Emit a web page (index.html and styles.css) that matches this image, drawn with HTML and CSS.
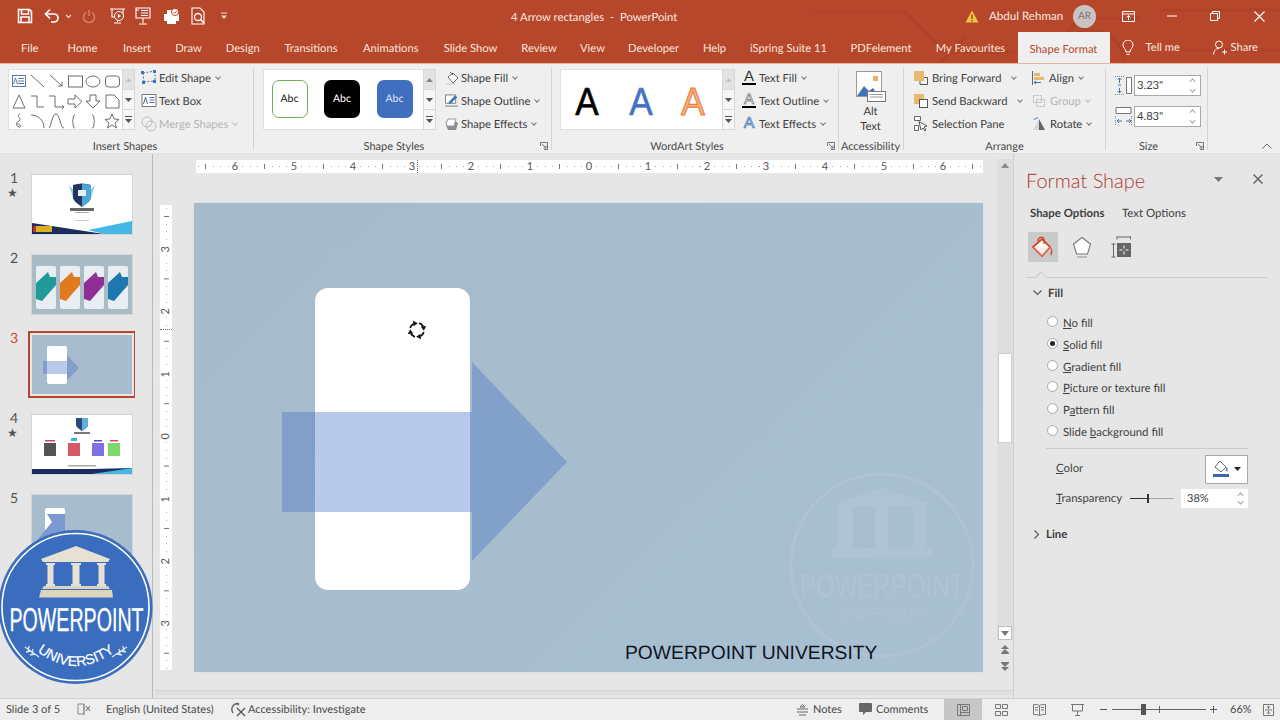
FILE: index.html
```html
<!DOCTYPE html>
<html lang="en">
<head>
<meta charset="utf-8">
<title>4 Arrow rectangles - PowerPoint</title>
<link rel="stylesheet" href="styles.css">
</head>
<body>
<div class="app">
  <div class="top">
    <svg class="circuit" viewBox="0 0 1280 63"><path d="M815 12h90l40 40h70M1040 63l40-45h60M1090 30a34 34 0 1 0 1 0M1160 10h120M1180 50h100M940 63l25-25" /></svg>
    <header class="titlebar">
      <div class="qat">
        <svg class="i q-save" width="16" height="16" viewBox="0 0 16 16"><path d="M1.500 1.500h11l2 2v11h-13z" fill="none" stroke="#fff" stroke-width="1.600"/><path d="M4.500 2v4h7V2M4 14.500V9h8v5.500" fill="none" stroke="#fff" stroke-width="1.500"/></svg>
        <svg class="i q-undo" width="16" height="16" viewBox="0 0 16 16"><path d="M2 6h8a4 4 0 0 1 0 8H7" fill="none" stroke="#fff" stroke-width="1.700"/><path d="M6 1.500 1.500 6 6 10.500" fill="none" stroke="#fff" stroke-width="1.700"/></svg>
        <svg class="i q-caret" width="7" height="5" viewBox="0 0 7 5"><path d="M1 1l2.500 2.500L6 1" fill="none" stroke="#f3d9d0" stroke-width="1.200"/></svg>
        <svg class="i q-redo" width="14" height="15" viewBox="0 0 14 15"><path d="M4 3.500a5.500 5.500 0 1 0 6 0M7 1v6" fill="none" stroke="#d98a72" stroke-width="1.300"/></svg>
        <svg class="i q-a" width="17" height="18" viewBox="0 0 17 18"><path d="M1 2h15M3 2v8h11V2M8.500 10v5M5 16h7" fill="none" stroke="#fff" stroke-width="1.100"/><circle cx="10" cy="9" r="4.500" fill="#b7472a" stroke="#fff"/><path d="M8.800 6.800 12 9l-3.200 2.200z" fill="#fff"/></svg>
        <svg class="i q-b" width="16" height="18" viewBox="0 0 16 18"><path d="M1 3h3M1 1h14v10H1zM8 11v5M4 17h8M6 3.500h7M6 6h7M6 8.500h7" fill="none" stroke="#fff" stroke-width="1.100"/></svg>
        <svg class="i q-c" width="17" height="17" viewBox="0 0 17 17"><path d="M1 6h15v7h-3v3H4v-3H1z" fill="#fff"/><path d="M4 6V2h8v4" fill="#fff"/><circle cx="12" cy="4" r="3.500" fill="#fff" stroke="#b7472a"/><path d="M10.500 4l1.200 1.200L13.800 3" fill="none" stroke="#b7472a"/></svg>
        <svg class="i q-d" width="14" height="18" viewBox="0 0 14 18"><path d="M1 1h8l4 4v12H1z" fill="none" stroke="#fff" stroke-width="1.100"/><circle cx="7" cy="10" r="3.500" fill="none" stroke="#fff" stroke-width="1.300"/><path d="M9.500 12.500 13 16" stroke="#fff" stroke-width="1.600"/></svg>
        <svg class="i q-e" width="8" height="8" viewBox="0 0 8 8"><path d="M1 1h6" stroke="#f3d9d0"/><path d="M1 3.500h6L4 7z" fill="#f3d9d0"/></svg>
      </div>
      <div class="doc-title">4 Arrow rectangles&nbsp; -&nbsp; PowerPoint</div>
      <div class="win">
        <svg class="i w-warn" width="14" height="13" viewBox="0 0 14 13"><path d="M7 .5 13.500 12.500H.500z" fill="#f5c242"/><path d="M7 4.500v4.500M7 10v1.500" stroke="#7a4a10" stroke-width="1.300"/></svg>
        <span class="user">Abdul Rehman</span>
        <span class="avatar">AR</span>
        <svg class="i w-a" width="13" height="11" viewBox="0 0 13 11"><path d="M.5.500h12v10H.5zM.5 3h12M6.500 9V4.500M4.500 6.500l2-2 2 2" fill="none" stroke="#fff"/></svg>
        <svg class="i w-b" width="10" height="2" viewBox="0 0 10 2"><path d="M0 1h10" stroke="#fff"/></svg>
        <svg class="i w-c" width="10" height="10" viewBox="0 0 10 10"><path d="M.5 2.500h7v7h-7zM2.500 2.500V.5h7v7h-2" fill="none" stroke="#fff"/></svg>
        <svg class="i w-d" width="11" height="11" viewBox="0 0 11 11"><path d="M.5.500l10 10M10.500.500l-10 10" stroke="#fff" stroke-width="1.100"/></svg>
      </div>
    </header>
    <nav class="tabs">
      <span class="tab">File</span><span class="tab">Home</span><span class="tab">Insert</span><span class="tab">Draw</span><span class="tab">Design</span><span class="tab">Transitions</span><span class="tab">Animations</span><span class="tab">Slide Show</span><span class="tab">Review</span><span class="tab">View</span><span class="tab">Developer</span><span class="tab">Help</span><span class="tab">iSpring Suite 11</span><span class="tab">PDFelement</span><span class="tab">My Favourites</span><span class="tab tab-active">Shape Format</span>
      <span class="tab-extra">
        <svg class="i" width="12" height="16" viewBox="0 0 12 16"><path d="M4 12c0-3-3-4-3-7a5 5 0 0 1 10 0c0 3-3 4-3 7zM4.500 14.500h3" fill="none" stroke="#fff"/></svg>
        <span class="tell">Tell me</span>
        <svg class="i share-i" width="14" height="15" viewBox="0 0 14 15"><circle cx="6" cy="4.500" r="3.500" fill="none" stroke="#fff"/><path d="M.5 14.500C1 10 3 8.500 6 8.500M9 12h5M11.500 9.500v5" fill="none" stroke="#fff"/></svg>
        <span>Share</span>
      </span>
    </nav>
  </div>

  <section class="ribbon">
    <div class="group g1">
      <div class="gbody">
        <div class="gallery gal-shapes">
          <svg class="i" width="114" height="61" viewBox="0 0 114 61"><g fill="none" stroke="#5c5c5c" stroke-width=".9">
            <rect x="3.500" y="5.500" width="13" height="11" stroke="#4a6a96"/><path d="M9 8.500h6M9 11h6M9 13.500h6M4.500 14l2-6 2 6" stroke="#4a6a96"/>
            <path d="M22 5l13 12M41 5l12 11M53 16v-4M53 16h-4"/>
            <rect x="59.500" y="6" width="14" height="11"/><ellipse cx="84" cy="11.500" rx="7" ry="5.500"/><rect x="96.500" y="6" width="14" height="11" rx="3"/>
            <path d="M10 25 4 38h12zM22 26h6v11h7M40 26h6v11h8M53 35l2 2-2 2M59 29h7v-4l7 6.500-7 6.500v-4h-7zM81 25h6v6h4l-7 7-7-7h4zM97 25h8l5 5v8H97z"/>
            <path d="M11 44c-5 2 3 5-1 7s-3 5 0 6 1-4-2-3M22 45c7 0 13 5 13 13M40 58c2-1 3-14 7-14s4 14 8 14"/>
            <path d="M66 45c-3 0-1 6-3 6.500 2 .5 0 6.500 3 6.500M83 45c3 0 1 6 3 6.500-2 .5 0 6.500-3 6.500"/>
            <path d="M103 44l2 5 5 .5-4 3.500 1.500 5-4.500-3-4.500 3 1.500-5-4-3.500 5-.5z"/></g></svg>
        </div>
        <div class="gscroll">
          <span class="gs gs-dis"><svg class="i" width="7" height="4" viewBox="0 0 7 4"><path d="M3.500 0 7 4H0z" fill="#c6c6c6"/></svg></span>
          <span class="gs"><svg class="i" width="7" height="4" viewBox="0 0 7 4"><path d="M0 0h7L3.500 4z" fill="#555"/></svg></span>
          <span class="gs"><svg class="i" width="7" height="7" viewBox="0 0 7 7"><path d="M0 .5h7" stroke="#555"/><path d="M0 3h7L3.500 7z" fill="#555"/></svg></span>
        </div>
        <div class="btns btns-1">
          <div class="rb"><svg class="i" width="16" height="15" viewBox="0 0 16 15"><path d="M2 3 14 1M2 3l1 9M3 12l11-1M14 1v10" fill="none" stroke="#3f74b5" stroke-dasharray="2 1.500"/><path d="M0 1h3v3H0zM12 0h3v3h-3zM1 11h3v3H1zM12 10h3v3h-3z" fill="#3f74b5"/></svg><span>Edit Shape</span><i class="car"></i></div>
          <div class="rb"><svg class="i" width="15" height="13" viewBox="0 0 15 13"><path d="M.5.500h14v12H.5z" fill="#fff" stroke="#777"/><path d="M8 3.500h5M8 6h5M8 8.500h5M2 10l2-7 2 7" fill="none" stroke="#4a6a96"/></svg><span>Text Box</span></div>
          <div class="rb rb-dis"><svg class="i" width="16" height="16" viewBox="0 0 16 16"><circle cx="6" cy="6" r="5" fill="none" stroke="#bdbdbd"/><circle cx="10" cy="10" r="5" fill="none" stroke="#bdbdbd"/></svg><span>Merge Shapes</span><i class="car"></i></div>
        </div>
      </div>
      <div class="glabel">Insert Shapes</div>
    </div>

    <div class="group g2">
      <div class="gbody">
        <div class="gallery gal-styles">
          <span class="abc abc-a">Abc</span><span class="abc abc-b">Abc</span><span class="abc abc-c">Abc</span>
        </div>
        <div class="gscroll">
          <span class="gs gs-dis"><svg class="i" width="7" height="4" viewBox="0 0 7 4"><path d="M3.500 0 7 4H0z" fill="#888"/></svg></span>
          <span class="gs"><svg class="i" width="7" height="4" viewBox="0 0 7 4"><path d="M0 0h7L3.500 4z" fill="#555"/></svg></span>
          <span class="gs"><svg class="i" width="7" height="7" viewBox="0 0 7 7"><path d="M0 .5h7" stroke="#555"/><path d="M0 3h7L3.500 7z" fill="#555"/></svg></span>
        </div>
        <div class="btns btns-2">
          <div class="rb"><svg class="i" width="14" height="14" viewBox="0 0 14 14"><path d="M3 6 8 2l5 5-5 5z" fill="#fff" stroke="#666"/><path d="M5 1l3 3" stroke="#666"/><path d="M1 13h9" stroke="#ddd" stroke-width="2"/></svg><span>Shape Fill</span><i class="car"></i></div>
          <div class="rb"><svg class="i" width="15" height="15" viewBox="0 0 15 15"><path d="M.5 1.500h11v9H.5z" fill="#fff" stroke="#777"/><path d="M4 9l7-7 2 2-7 7H4z" fill="#3f74b5"/><path d="M0 13.500h14" stroke="#777"/></svg><span>Shape Outline</span><i class="car"></i></div>
          <div class="rb"><svg class="i" width="14" height="14" viewBox="0 0 14 14"><path d="M1 4h9l3 2-2 7H3L1 8z" fill="#8c8c8c"/><path d="M1 6l2-4h8l-2 7H2z" fill="#fff" stroke="#999"/></svg><span>Shape Effects</span><i class="car"></i></div>
        </div>
      </div>
      <div class="glabel">Shape Styles</div>
      <svg class="launch" width="8" height="8" viewBox="0 0 8 8"><path d="M.5 4V.5H7.500V7.500H4M2 2l4 4M6 3.500V6H3.500" fill="none" stroke="#777"/></svg>
    </div>

    <div class="group g3">
      <div class="gbody">
        <div class="gallery gal-wordart">
          <span class="wa wa-a">A</span><span class="wa wa-b">A</span><span class="wa wa-c">A</span>
        </div>
        <div class="gscroll">
          <span class="gs gs-dis"><svg class="i" width="7" height="4" viewBox="0 0 7 4"><path d="M3.500 0 7 4H0z" fill="#c6c6c6"/></svg></span>
          <span class="gs"><svg class="i" width="7" height="4" viewBox="0 0 7 4"><path d="M0 0h7L3.500 4z" fill="#555"/></svg></span>
          <span class="gs"><svg class="i" width="7" height="7" viewBox="0 0 7 7"><path d="M0 .5h7" stroke="#555"/><path d="M0 3h7L3.500 7z" fill="#555"/></svg></span>
        </div>
        <div class="btns btns-3">
          <div class="rb"><span class="ta ta-fill">A</span><span>Text Fill</span><i class="car"></i></div>
          <div class="rb"><span class="ta ta-line">A</span><span>Text Outline</span><i class="car"></i></div>
          <div class="rb"><span class="ta ta-fx">A</span><span>Text Effects</span><i class="car"></i></div>
        </div>
      </div>
      <div class="glabel">WordArt Styles</div>
      <svg class="launch" width="8" height="8" viewBox="0 0 8 8"><path d="M.5 4V.5H7.500V7.500H4M2 2l4 4M6 3.500V6H3.500" fill="none" stroke="#777"/></svg>
    </div>

    <div class="group g4">
      <div class="gbody alt">
        <svg class="i" width="30" height="31" viewBox="0 0 30 31"><path d="M.5.500h25v25H.5z" fill="#fff" stroke="#999"/><rect x="17" y="5" width="5" height="5" fill="#e8b35c"/><path d="M1 25l7-10 5 5 4-3 5 8z" fill="#3f74b5"/><rect x="11.500" y="20.500" width="18" height="10" fill="#fff" stroke="#777"/><path d="M14 23.500h13M14 26h13" stroke="#999"/></svg>
        <div class="alt-t">Alt<br>Text</div>
      </div>
      <div class="glabel">Accessibility</div>
    </div>

    <div class="group g5">
      <div class="gbody">
        <div class="btns btns-5a">
          <div class="rb"><svg class="i" width="14" height="14" viewBox="0 0 14 14"><rect x="0" y="0" width="10" height="10" fill="#e6b96c"/><path d="M10 6.500h3.500v7H6V10" fill="none" stroke="#555"/></svg><span>Bring Forward</span><i class="car car-far"></i></div>
          <div class="rb"><svg class="i" width="14" height="14" viewBox="0 0 14 14"><rect x="0" y="0" width="10" height="10" fill="#e6b96c"/><rect x="5.500" y="5.500" width="8" height="8" fill="#fff" stroke="#555"/></svg><span>Send Backward</span><i class="car car-far"></i></div>
          <div class="rb"><svg class="i" width="14" height="15" viewBox="0 0 14 15"><path d="M.5.500h6v4h-6zM.5 9.500h4v5h-4z" fill="#fff" stroke="#666"/><path d="M5 5.500 13 10l-3 1 2 3-1 1-2-3-2 2z" fill="#fff" stroke="#555"/></svg><span>Selection Pane</span></div>
        </div>
        <div class="btns btns-5b">
          <div class="rb"><svg class="i" width="13" height="14" viewBox="0 0 13 14"><path d="M.5 0v14" stroke="#666"/><rect x="2" y="2" width="6" height="3" fill="#e6b96c"/><rect x="2" y="6" width="10" height="3" fill="#e6b96c"/><path d="M2 11.500h7M2 11.500l2-1.500M2 11.500 4 13" stroke="#3f74b5" fill="none"/></svg><span>Align</span><i class="car"></i></div>
          <div class="rb rb-dis"><svg class="i" width="14" height="14" viewBox="0 0 14 14"><path d="M1.500 1.500h8v7h-8zM4.500 5.500h8v7h-8z" fill="none" stroke="#bbb" stroke-dasharray="2 1"/></svg><span>Group</span><i class="car"></i></div>
          <div class="rb"><svg class="i" width="14" height="13" viewBox="0 0 14 13"><path d="M7 2 13 13H7z" fill="#666"/><path d="M7 2 1 13h6z" fill="#d6d6d6"/><path d="M2 3c1-2 3-2 4-2" stroke="#3f74b5" fill="none"/></svg><span>Rotate</span><i class="car"></i></div>
        </div>
      </div>
      <div class="glabel">Arrange</div>
    </div>

    <div class="group g6">
      <div class="gbody size">
        <div class="size-row">
          <svg class="i" width="17" height="21" viewBox="0 0 17 21"><path d="M11.500 2.500h5v16h-5z" fill="#fff" stroke="#777"/><path d="M0 1.500h9M0 19.500h9" stroke="#888" stroke-dasharray="1 1"/><path d="M4.500 3v5M4.500 13v5M2.500 5l2-2 2 2M2.500 16l2 2 2-2" fill="none" stroke="#3f74b5"/><path d="M3 10h3" stroke="#3f74b5"/></svg>
          <div class="spin"><span>3.23"</span><i class="updown"><b></b><b class="dn"></b></i></div>
        </div>
        <div class="size-row">
          <svg class="i" width="17" height="21" viewBox="0 0 17 21"><path d="M1 1.500h15v6H1z" fill="#fff" stroke="#777"/><path d="M.5 10v10M16.500 10v10" stroke="#888" stroke-dasharray="1 1"/><path d="M2 15h5M11 15h5M4 13l-2 2 2 2M14 13l2 2-2 2" fill="none" stroke="#3f74b5"/></svg>
          <div class="spin"><span>4.83"</span><i class="updown"><b></b><b class="dn"></b></i></div>
        </div>
      </div>
      <div class="glabel">Size</div>
      <svg class="launch" width="8" height="8" viewBox="0 0 8 8"><path d="M.5 4V.5H7.500V7.500H4M2 2l4 4M6 3.500V6H3.500" fill="none" stroke="#777"/></svg>
    </div>
    <div class="g7">
      <svg class="i" width="10" height="6" viewBox="0 0 10 6"><path d="M.5 5.500 5 1l4.500 4.500" fill="none" stroke="#666"/></svg>
    </div>
  </section>

  <main class="main">
    <aside class="thumbs">
      <div class="trow">
        <div class="tnum"><span>1</span><span class="star">★</span></div>
        <svg class="thumb" width="100" height="59" viewBox="0 0 100 59"><rect width="100" height="59" fill="#fff"/><path d="M37 10l4 13 9 4 9-4 4-13-6 7H43z" fill="#8ccbe6"/><path d="M41 10c6-2 12-2 18 0v12c0 4-5 7-9 10-4-3-9-6-9-10z" fill="#23345e"/><path d="M50 9c3 0 6 .5 9 1v12c0 4-5 7-9 10z" fill="#4aa8d8"/><rect x="46" y="15" width="8" height="6" fill="#e8edf3"/><rect x="38" y="33" width="24" height="3" fill="#666"/><rect x="43" y="37" width="14" height="1" fill="#aaa"/><rect x="43" y="45" width="14" height="1" fill="#ccc"/><path d="M0 48 72 59H0z" fill="#1d2c5e"/><path d="M56 55 100 46V59H72z" fill="#43b8e6"/><rect x="3" y="51" width="17" height="6" fill="#d8b020"/><rect x="1" y="51" width="3" height="6" fill="#c83030"/></svg>
      </div>
      <div class="trow">
        <div class="tnum"><span>2</span></div>
        <svg class="thumb" width="100" height="59" viewBox="0 0 100 59"><rect width="100" height="59" fill="#a9bcc6"/><rect x="4" y="11" width="20" height="43" rx="2" fill="#e8edf2"/><path d="M4 44V28L16 17l2 5h6v8L10 46z" fill="#1f9a96"/><rect x="28" y="11" width="20" height="43" rx="2" fill="#e8edf2"/><path d="M28 44V28L40 17l2 5h6v8L34 46z" fill="#e2791a"/><rect x="52" y="11" width="20" height="43" rx="2" fill="#e8edf2"/><path d="M52 44V28L64 17l2 5h6v8L58 46z" fill="#8f2f95"/><rect x="76" y="11" width="20" height="43" rx="2" fill="#e8edf2"/><path d="M76 44V28L88 17l2 5h6v8L82 46z" fill="#1c78ae"/></svg>
      </div>
      <div class="trow trow-sel">
        <div class="tnum tnum-sel"><span>3</span></div>
        <svg class="thumb" width="100" height="59" viewBox="0 0 100 59"><rect width="100" height="59" fill="#a7bccd"/><rect x="15" y="11" width="20" height="38" rx="2" fill="#fff"/><path d="M11 26H35V20L47 33 35 45.500V39H11z" fill="#4472c4" fill-opacity=".38"/></svg>
      </div>
      <div class="trow">
        <div class="tnum"><span>4</span><span class="star">★</span></div>
        <svg class="thumb" width="100" height="59" viewBox="0 0 100 59"><rect width="100" height="59" fill="#fff"/><path d="M44 3h12v7c0 2-3 4-6 6-3-2-6-4-6-6z" fill="#2a4a7a"/><path d="M50 3h6v7c0 2-3 4-6 6z" fill="#5cb0dc"/><rect x="42" y="17" width="16" height="2" fill="#777"/><rect x="12" y="28" width="12" height="13" fill="#555"/><rect x="36" y="28" width="12" height="13" fill="#d65a66"/><rect x="60" y="28" width="12" height="13" fill="#7f6fe0"/><rect x="76" y="28" width="12" height="13" fill="#7ed868"/><rect x="13" y="25" width="10" height="1.500" fill="#d04060"/><rect x="39" y="23" width="6" height="3" fill="#3cb0e0"/><rect x="62" y="25" width="8" height="1.500" fill="#5050c0"/><rect x="78" y="25" width="8" height="1.500" fill="#e04080"/><rect x="36" y="50" width="28" height="1.500" fill="#aaa"/><path d="M0 54h60l40-1v6H0z" fill="#1d2c5e"/><path d="M60 59l40-6v6z" fill="#43b8e6"/></svg>
      </div>
      <div class="trow">
        <div class="tnum"><span>5</span></div>
        <svg class="thumb" width="100" height="59" viewBox="0 0 100 59"><rect width="100" height="59" fill="#a7bccd"/><rect x="13" y="13" width="20" height="38" rx="2" fill="#fff"/><path d="M1 50 20 27 15 19H33V50z" fill="#7c9ad0"/></svg>
      </div>
    </aside>

    <div class="editor">
      <div class="canvas">
        <div class="ruler-h">
          <span>6</span><span>5</span><span>4</span><span>3</span><span>2</span><span>1</span><span>0</span><span>1</span><span>2</span><span>3</span><span>4</span><span>5</span><span>6</span>
          <i class="mark-h"></i>
        </div>
        <div class="work">
          <div class="ruler-v">
            <span>3</span><span>2</span><span>1</span><span>0</span><span>1</span><span>2</span><span>3</span>
            <i class="mark-v"></i>
          </div>
          <div class="slide">
            <svg class="wm" width="190" height="190" viewBox="-95 -95 190 190">
              <circle r="91" fill="none" stroke="#afc4d3" stroke-width="3"/>
              <path d="M0-77-46-62v4H46v-4zM-44-58h15v41h-15zM-7-58H6v41H-7zM31-58h13v41H31zM-50-17H50v9H-50z" fill="#afc4d3"/>
              <text class="wm-t1" transform="translate(0 32) scale(.73 1)" x="0" y="0" text-anchor="middle">POWERPOINT</text>
              <text class="wm-t2" transform="translate(0 55) scale(.78 1)" x="0" y="0" text-anchor="middle">UNIVERSITY</text>
            </svg>
            <div class="card"></div>
            <svg class="arrow" width="789" height="469" viewBox="194 203 789 469"><path d="M282 412H472V362L567 462 472 561V512H282z" fill="#4472c4" fill-opacity=".38"/></svg>
            <svg class="rot" width="20" height="20" viewBox="0 0 20 20"><g fill="none" stroke="#111" stroke-width="1.800"><path d="M3.200 8A7 7 0 0 1 6.500 3.800"/><path d="M12 3.200A7 7 0 0 1 16.200 6.500"/><path d="M16.800 12A7 7 0 0 1 13.500 16.200"/><path d="M8 16.800A7 7 0 0 1 3.800 13.500"/></g><g fill="#111"><path d="M6 0.800 10.800 3.200 6.500 6.200z"/><path d="M19.200 6 16.800 10.800 13.800 6.500z"/><path d="M14 19.200 9.200 16.800 13.500 13.800z"/><path d="M.8 14 3.200 9.200 6.200 13.500z"/></g></svg>
            <div class="slide-text">POWERPOINT UNIVERSITY</div>
          </div>
        </div>
      </div>
      <div class="vscroll">
        <span class="vs-btn"><svg class="i" width="8" height="5" viewBox="0 0 8 5"><path d="M4 0l4 5H0z" fill="#8a8a8a"/></svg></span>
        <span class="vs-track"><i class="vs-thumb"></i></span>
        <span class="vs-btn vs-white"><svg class="i" width="8" height="5" viewBox="0 0 8 5"><path d="M0 0h8L4 5z" fill="#777"/></svg></span>
        <span class="vs-dbl"><svg class="i" width="8" height="9" viewBox="0 0 8 9"><path d="M4 0l4 4H0zM4 4l4 4H0z" fill="#777"/><path d="M0 8.500h8" stroke="#777"/></svg></span>
        <span class="vs-dbl"><svg class="i" width="8" height="9" viewBox="0 0 8 9"><path d="M0 .5h8" stroke="#777"/><path d="M0 1h8L4 5zM0 5h8L4 9z" fill="#777"/></svg></span>
      </div>
      <div class="hscroll"></div>
    </div>

    <aside class="pane">
      <div class="pane-head"><span class="pane-title">Format Shape</span>
        <svg class="i pane-caret" width="9" height="5" viewBox="0 0 9 5"><path d="M0 0h9L4.500 5z" fill="#777"/></svg>
        <svg class="i pane-x" width="10" height="10" viewBox="0 0 10 10"><path d="M.5.500l9 9M9.500.500l-9 9" stroke="#666" stroke-width="1.500"/></svg>
      </div>
      <div class="pane-tabs"><b>Shape Options</b><span>Text Options</span></div>
      <div class="pane-icons">
        <span class="pi pi-on"><svg class="i" width="22" height="24" viewBox="0 0 22 24"><path d="M1 12l9-8 8 8-8 9z" fill="#fff" stroke="#d2492a" stroke-width="1.800"/><path d="M6 6c0-4 5-5 6-2v5" fill="none" stroke="#d2492a" stroke-width="1.300"/><path d="M1 12h17l-8 9z" fill="#f6d9d0" opacity=".5"/><path d="M18 12c3 2 3 6 1 9-1-3 1-5-1-9z" fill="#d2492a"/></svg></span>
        <span class="pi"><svg class="i" width="20" height="23" viewBox="0 0 20 23"><path d="M10 1.500 18.500 8 15.500 18h-11L1.500 8z" fill="#fff" stroke="#777" stroke-width="1.100"/><path d="M5 21h10" stroke="#bbb" stroke-width="2"/></svg></span>
        <span class="pi"><svg class="i" width="20" height="22" viewBox="0 0 20 22"><path d="M6 1h14M6 .5v3M19.500.5v3M.5 8h4M.5 21h4M2.500 8v13" fill="none" stroke="#666"/><rect x="6" y="7" width="14" height="14" fill="#666"/><path d="M13 9.500v3M13 15.500v3M8.500 14h3M14.500 14h3" stroke="#fff"/></svg></span>
      </div>
      <div class="pane-rule"><i></i></div>
      <div class="sec"><svg class="i" width="9" height="6" viewBox="0 0 9 6"><path d="M.5.500l4 4 4-4" fill="none" stroke="#555" stroke-width="1.100"/></svg><b>Fill</b></div>
      <ul class="radios">
        <li><i class="radio"></i><span><u>N</u>o fill</span></li>
        <li><i class="radio radio-on"></i><span><u>S</u>olid fill</span></li>
        <li><i class="radio"></i><span><u>G</u>radient fill</span></li>
        <li><i class="radio"></i><span><u>P</u>icture or texture fill</span></li>
        <li><i class="radio"></i><span>P<u>a</u>ttern fill</span></li>
        <li><i class="radio"></i><span>Slide <u>b</u>ackground fill</span></li>
      </ul>
      <div class="sep"></div>
      <div class="prop prop-color"><span class="color-l"><u>C</u>olor</span>
        <span class="colorbtn"><svg class="i" width="16" height="18" viewBox="0 0 16 18"><path d="M2 7l5-6 6 6-5 5z" fill="#fff" stroke="#666"/><path d="M13 7c2 1 2 3 1 5-1-2-1-3-1-5z" fill="#3f74b5"/><rect x="0" y="14" width="16" height="3" fill="#3f63b8"/></svg><svg class="i" width="7" height="4" viewBox="0 0 7 4"><path d="M0 0h7L3.500 4z" fill="#222"/></svg></span>
      </div>
      <div class="prop prop-trans"><span><u>T</u>ransparency</span>
        <span class="slider"><i></i></span>
        <span class="pct"><span>38%</span><i class="updown"><b></b><b class="dn"></b></i></span>
      </div>
      <div class="sec sec-line"><svg class="i" width="6" height="9" viewBox="0 0 6 9"><path d="M.5.500l4 4-4 4" fill="none" stroke="#555" stroke-width="1.100"/></svg><b>Line</b></div>
    </aside>
  </main>

  <footer class="status">
    <span class="st-slide">Slide 3 of 5</span>
    <svg class="i st-spell" width="14" height="13" viewBox="0 0 14 13"><path d="M6.500 1H1v10h6V1M7 1v11" fill="none" stroke="#888"/><path d="M9 3l4 5M13 3 9 8" stroke="#666"/></svg>
    <span class="st-lang">English (United States)</span>
    <svg class="i st-acc" width="16" height="15" viewBox="0 0 16 15"><path d="M7 1.500A6 6 0 0 0 3 11" fill="none" stroke="#666" stroke-width="1.300"/><path d="M7 6l8 8M15 6l-8 8" stroke="#555" stroke-width="1.300"/><circle cx="8" cy="2" r="1.300" fill="#666"/></svg>
    <span class="st-access">Accessibility: Investigate</span>
    <svg class="i st-notes" width="11" height="12" viewBox="0 0 11 12"><path d="M3 3l2.500-2.500L8 3zM0 5h11M0 8h11M2 11h7" fill="none" stroke="#666"/></svg>
    <span class="st-note-t">Notes</span>
    <svg class="i st-com" width="13" height="13" viewBox="0 0 13 13"><path d="M1 0h11a1 1 0 0 1 1 1v7a1 1 0 0 1-1 1H7l-3 3V9H1a1 1 0 0 1-1-1V1a1 1 0 0 1 1-1z" fill="#666"/></svg>
    <span class="st-com-t">Comments</span>
    <span class="view view-on"><svg class="i" width="13" height="12" viewBox="0 0 13 12"><path d="M.5.500h12v11H.5zM3.500.500v11M5.500 2.500h5v4h-5zM3.500 8.500h9" fill="none" stroke="#777"/></svg></span>
    <span class="view"><svg class="i" width="13" height="12" viewBox="0 0 13 12"><path d="M.5.500h5v4h-5zM7.500.500h5v4h-5zM.5 7.500h5v4h-5zM7.500 7.500h5v4h-5z" fill="none" stroke="#777"/></svg></span>
    <span class="view"><svg class="i" width="13" height="12" viewBox="0 0 13 12"><path d="M6.500 1.500C5 .5 2 .5.500.5v10c1.500 0 4.500 0 6 1 1.500-1 4.500-1 6-1V.5c-1.500 0-4.500 0-6 1zM6.500 1.500v10M2 3.500h3M2 6h3M8 3.500h3M8 6h3" fill="none" stroke="#777"/></svg></span>
    <span class="view"><svg class="i" width="13" height="12" viewBox="0 0 13 12"><path d="M0 .5h13M1.500 1v6h10V1M6.500 7v4M4 11.500h5" fill="none" stroke="#777"/></svg></span>
    <span class="zoom-minus"></span>
    <span class="zoom-track"><i class="zt"></i><i class="zm"></i></span>
    <span class="zoom-plus"></span>
    <span class="zoom-pct">66%</span>
    <svg class="i st-fit" width="11" height="12" viewBox="0 0 11 12"><path d="M.5.500h10v11H.5zM5.500 2v3M5.500 7v3M4 3.500l1.500-1.500L7 3.500M4 8.500 5.500 10 7 8.500M2 6h7" fill="none" stroke="#777"/></svg>
  </footer>

  <svg class="logo" width="156" height="156" viewBox="0 529 156 156">
    <circle cx="75.500" cy="607" r="77" fill="#3b6dbf"/>
    <circle cx="75.500" cy="607" r="73.500" fill="none" stroke="#fff" stroke-width="1.600"/>
    <path d="M76 546 110 559 108 562H43L41 559z" fill="#e6e1d2"/>
    <path d="M46 563h9v2h-1.500v19H55v2h-9v-2h1.500v-19H46zM71 563h10v2h-1.500v19H81v2H71v-2h1.500v-19H71zM97 563h9v2h-1.500v19h1.500v2h-9v-2h1.500v-19H97z" fill="#e6e1d2"/>
    <path d="M44 586h64l2 3H42zM41 590h71l1 7.500H39z" fill="#dcd5be"/>
    <text class="logo-t1" transform="translate(76.500 631) scale(.595 1)" x="0" y="0" text-anchor="middle">POWERPOINT</text>
    <path id="arc" d="M24 640Q76 692 128 640" fill="none"/>
    <text class="logo-t2"><textPath href="#arc" startOffset="50%" text-anchor="middle">UNIVERSITY</textPath></text>
    <path d="M25 647 39 657M29 646l-1 5M33 649l-1 5M26 652l5-1M30 655l5-1M127 647 112 657M123 646l1 5M119 649l1 5M126 652l-5-1M122 655l-5-1" stroke="#dfe6f3" stroke-width="1.300" fill="none"/>
  </svg>
</div>
</body>
</html>
```
FILE: styles.css
```css
*, *::before, *::after { box-sizing: border-box; }
html, body { margin: 0; padding: 0; }
body { width: 1280px; height: 720px; overflow: hidden; background: #e6e6e6; font-family: Lato, Roboto, "Liberation Sans", sans-serif; font-size: 11.200px; color: #3e3e3e; text-rendering: geometricPrecision; }
i, b { font-style: normal; }
.i { display: block; flex: none; }
.app { position: relative; width: 1280px; height: 720px; display: flex; flex-direction: column; overflow: hidden; }

/* title + tabs */
.top { position: relative; height: 63px; background: #b7472a; color: #f8e9e3; flex: none; }
.circuit { position: absolute; left: 0; top: 0; width: 1280px; height: 63px; fill: none; stroke: #ae4328; stroke-width: 3; }
.titlebar { position: relative; height: 32px; display: flex; align-items: center; }
.qat { width: 511px; display: flex; align-items: center; padding-left: 17px; }
.q-undo { margin-left: 11px; }
.q-caret { margin-left: 4.500px; }
.q-redo { margin-left: 10.500px; }
.q-a { margin-left: 12.500px; }
.q-b { margin-left: 9.500px; }
.q-c { margin-left: 11.500px; }
.q-d { margin-left: 11.500px; }
.q-e { margin-left: 15px; }
.doc-title { color: #f8e9e3; white-space: nowrap; width: 166px; font-size: 11.300px; padding-top: 2px; }
.win { margin-left: 288px; display: flex; align-items: center; }
.user { margin-left: 10px; width: 74px; white-space: nowrap; color: #f8e9e3; font-size: 11.600px; }
.avatar { margin-left: 10px; width: 23px; height: 23px; border-radius: 50%; background: #c9c4c2; color: #7c7472; font-size: 10px; display: flex; align-items: center; justify-content: center; }
.w-a { margin-left: 26px; }
.w-b { margin-left: 32px; }
.w-c { margin-left: 33px; }
.w-d { margin-left: 34px; }

.tabs { position: relative; height: 31px; display: grid; grid-template-columns: 49.5px 56px 53px 50px 58.5px 78px 81.5px 78px 59px 48px 74px 48px 100px 85px 94px 92px auto; padding-left: 5px; align-items: center; }
.tab { text-align: center; white-space: nowrap; color: #f7e6df; padding-top: 2px; }
.tab-active { background: #efefef; color: #b7472a; height: 31px; line-height: 31px; }
.tab-extra { display: flex; align-items: center; color: #f7e6df; padding-left: 12px; }
.tell { margin-left: 12px; width: 37px; white-space: nowrap; }
.share-i { margin-left: 30px; margin-right: 4px; }

/* ribbon */
.ribbon { flex: none; height: 91px; background: #efefef; display: flex; border-top: 1px solid #e9b29f; border-bottom: 1px solid #e2e2e2; }
.group { position: relative; height: 82px; margin-top: 4px; padding-top: 1px; border-right: 1px solid #d4d4d4; display: flex; flex-direction: column; flex: none; }
.gbody { height: 69px; display: flex; align-items: flex-start; }
.glabel { text-align: center; height: 16px; line-height: 18px; font-size: 11px; color: #4a4a4a; margin-bottom: -4px; white-space: nowrap; }
.launch { position: absolute; right: 3px; bottom: 0; }
.g1 { width: 254px; padding-left: 8px; }
.g2 { width: 298px; padding-left: 9px; }
.g3 { width: 287px; padding-left: 8px; }
.g4 { width: 65px; padding-right: 1px; }
.g5 { width: 202px; }
.g6 { width: 102px; }
.g7 { flex: 1; display: flex; align-items: flex-end; justify-content: flex-end; padding: 0 8px 4px 0; }
.g1 .glabel { padding-right: 11px; }
.g2 .glabel { padding-right: 26px; }
.g3 .glabel { padding-right: 24px; }
.g6 .glabel { padding-right: 16px; }
.gallery { height: 61px; background: #fff; flex: none; border: 1px solid #e0e0e0; border-right: 0; }
.gal-shapes { width: 114px; }
.gal-styles { width: 160px; display: flex; align-items: center; padding-left: 7.500px; gap: 16.500px; }
.gal-wordart { width: 162px; display: flex; align-items: center; padding-left: 5px; }
.gscroll { width: 13px; height: 61px; flex: none; display: flex; flex-direction: column; border: 1px solid #d8d8d8; background: #f6f6f6; }
.gs { flex: 1; display: flex; align-items: center; justify-content: center; border-bottom: 1px solid #d8d8d8; }
.gs:last-child { border-bottom: 0; }
.gs-dis { background: #e3e3e3; }

.btns { display: flex; flex-direction: column; margin-top: -3px; flex: none; }
.rb { height: 23px; display: flex; align-items: center; white-space: nowrap; color: #3e3e3e; line-height: 16px; }
.rb > span:not(.ta) { padding-top: 2px; }
.rb > .i { margin-right: 3px; }
.rb-dis { color: #b5b5b5; }
.car { display: block; width: 4px; height: 4px; margin-left: 5px; margin-top: -2px; border-right: 1px solid #777; border-bottom: 1px solid #777; transform: rotate(45deg); flex: none; }
.rb-dis .car { border-color: #bbb; }
.car-far { margin-left: 11px; }
.btns-1 { margin-left: 6px; }
.btns-1 .rb > .i { width: 16px; margin-right: 2px; }
.btns-2 { margin-left: 9px; }
.btns-2 .rb > .i { margin-right: 2px; width: 14px; }
.btns-3 { margin-left: 7px; }
.btns-5a { margin-left: 10px; width: 118px; }
.btns-5a .rb > .i { margin-right: 4px; }
.btns-5b { margin-left: 0; }
.btns-5b .rb > .i { margin-right: 4px; }

.abc { width: 36px; height: 38px; border-radius: 7px; display: flex; align-items: center; justify-content: center; font-size: 10.500px; margin-top: -1px; flex: none; }
.abc-a { background: #fff; border: 1px solid #74ad58; color: #222; }
.abc-b { background: #000; color: #fff; }
.abc-c { background: #3f6fbe; color: #dce6f5; }
.wa { font-family: "Liberation Sans", sans-serif; font-size: 39px; line-height: 1; width: 42px; text-align: center; font-weight: 400; flex: none; margin-top: 6px; transform: scaleX(.9); }
.wa-a { color: #000; -webkit-text-stroke: .6px #000; }
.wa-b { color: #4472c4; -webkit-text-stroke: .6px #4472c4; margin-left: 12px; }
.wa-c { color: #f6b592; -webkit-text-stroke: 1.2px #ed7d31; margin-left: 10px; }
.ta { display: block; width: 14px; height: 15px; margin-right: 3px; flex: none; font-family: "Liberation Sans", sans-serif; font-size: 15px; line-height: 13px; text-align: center; }
.ta-fill { color: #333; border-bottom: 2px solid #000; }
.ta-line { color: #fff; -webkit-text-stroke: .6px #555; border-bottom: 2px solid #000; }
.ta-fx { color: #cfe0f3; -webkit-text-stroke: .7px #3f74b5; font-size: 16px; line-height: 15px; }

.alt { flex-direction: column; align-items: center; padding-top: 2px; }
.alt-t { text-align: center; line-height: 15px; margin-top: 2px; }

.size { flex-direction: column; padding: 6px 0 0 9px; gap: 10px; align-items: flex-start; }
.size-row { display: flex; align-items: center; gap: 2px; }
.spin { width: 67px; height: 21px; background: #fff; border: 1px solid #a8a8a8; display: flex; align-items: center; justify-content: space-between; padding: 0 4px 0 2px; color: #3e3e3e; }
.updown { display: flex; flex-direction: column; gap: 6px; width: 7px; flex: none; }
.updown b { display: block; width: 5px; height: 5px; margin: 0 auto; border-left: 1px solid #888; border-top: 1px solid #888; transform: rotate(45deg) scale(.85); }
.updown .dn { transform: rotate(225deg) scale(.85); margin-top: -3px; }

/* main */
.main { flex: 1; display: flex; min-height: 0; }
.thumbs { width: 153px; flex: none; border-right: 1px solid #b9b9b9; padding-top: 21px; display: flex; flex-direction: column; gap: 21px; }
.trow { height: 59px; position: relative; display: flex; padding-left: 32px; flex: none; }
.thumb { display: block; flex: none; outline: 1px solid #d4d4d4; }
.trow-sel .thumb { outline: 2px solid #e6e6e6; position: relative; }
.trow-sel::before { content: ""; position: absolute; left: 28px; top: -4px; width: 107px; height: 67px; border: 2.500px solid #b7472a; }
.tnum { position: absolute; left: 8px; top: -5px; width: 12px; display: flex; flex-direction: column; align-items: center; font-size: 14px; line-height: 16px; color: #555; }
.tnum-sel { color: #d0492b; }
.star { font-size: 12px; line-height: 14px; margin-left: -3px; color: #555; font-family: "DejaVu Sans", sans-serif; }

.editor { position: relative; flex: none; width: 860px; display: flex; }
.canvas { width: 844px; flex: none; padding-top: 6px; }
.ruler-h { position: relative; margin-left: 43px; width: 787px; height: 13px; padding-left: 9.500px; display: flex; color: #555; font-size: 11px; line-height: 13px;
  background-color: #fff;
  background-image: linear-gradient(90deg, #777 1px, transparent 1px), repeating-linear-gradient(90deg, #aaa 0 1px, transparent 1px 7.375px);
  background-size: 59px 5px, 100% 1px;
  background-repeat: repeat-x, no-repeat;
  background-position: 9px 4px, 2px 6px;
}
.ruler-h span { width: 59px; text-align: center; background: linear-gradient(#fff, #fff) center / 12px 13px no-repeat; flex: none; }
.mark-h { position: absolute; left: 221px; top: 0; height: 13px; border-left: 1px dotted #666; }
.work { display: flex; margin-top: 30px; }
.ruler-v { position: relative; margin: 2px 0 0 7px; width: 12px; height: 465px; flex: none; padding-top: 13px; display: flex; flex-direction: column; color: #555; font-size: 11px;
  background-color: #fff;
  background-image: linear-gradient(#777 1px, transparent 1px), repeating-linear-gradient(#aaa 0 1px, transparent 1px 7.800px);
  background-size: 5px 62.400px, 1px 100%;
  background-repeat: repeat-y, no-repeat;
  background-position: 4px 11px, 6px 3px;
}
.ruler-v span { height: 62.400px; display: flex; align-items: center; justify-content: center; background: linear-gradient(#fff, #fff) center / 12px 12px no-repeat; flex: none; transform: rotate(-90deg); line-height: 12px; }
.mark-v { position: absolute; left: 0; top: 124px; width: 12px; border-top: 1px dotted #666; }

.slide { position: relative; margin-left: 22px; width: 789px; height: 469px; flex: none; background: linear-gradient(135deg, #a6bbcc, #a8c0d1); overflow: hidden; box-shadow: 0 0 1px #c8c8c8; }
.wm { position: absolute; left: 593px; top: 267px; }
.wm-t1 { font-family: "Liberation Sans", sans-serif; font-size: 33px; fill: #afc4d3; }
.wm-t2 { font-family: "Liberation Sans", sans-serif; font-size: 18px; fill: #afc4d3; }
.card { position: absolute; left: 121px; top: 85px; width: 155px; height: 302px; background: #fff; border-radius: 13px; }
.arrow { position: absolute; left: 0; top: 0; }
.rot { position: absolute; left: 213px; top: 117px; }
.slide-text { position: absolute; left: 431px; top: 440px; font-family: "Liberation Sans", sans-serif; font-size: 19.300px; line-height: 22px; color: #10141f; white-space: nowrap; }

.vscroll { width: 16px; height: 515px; display: flex; flex-direction: column; align-items: center; margin-top: 5px; flex: none; background: #dedede; }
.vs-btn { width: 14px; height: 13px; display: flex; align-items: center; justify-content: center; flex: none; }
.vs-white { background: #fff; border: 1px solid #c0c0c0; height: 14px; }
.vs-track { position: relative; width: 100%; flex: none; height: 454px; }
.vs-thumb { position: absolute; left: 1px; top: 181px; width: 14px; height: 90px; background: #fff; border: 1px solid #cfcfcf; }
.vs-dbl { width: 100%; height: 18px; background: #e6e6e6; display: flex; align-items: center; justify-content: center; flex: none; }
.vs-dbl + .vs-dbl { height: 16px; }
.hscroll { position: absolute; left: 2px; right: 0; bottom: 3px; height: 5px; background: #dfdfdf; border-top: 1px solid #d0d0d0; }

/* pane */
.pane { width: 267px; flex: none; border-left: 1px solid #cfcfcf; padding-left: 12px; background: #e6e6e6; font-size: 11.400px; }
.pane-head { display: flex; align-items: center; height: 28px; margin-top: 13px; }
.pane-title { font-size: 20px; color: #b03a30; width: 188px; white-space: nowrap; font-weight: 300; }
.pane-caret { margin-top: -4px; }
.pane-x { margin-left: 30px; margin-top: -4px; }
.pane-tabs { display: flex; height: 18px; margin-top: 9px; padding-left: 4px; align-items: center; }
.pane-tabs b { font-weight: 700; width: 92px; white-space: nowrap; }
.pane-icons { display: flex; margin: 10px 0 0 2px; gap: 9px; height: 30px; }
.pi { width: 30px; height: 30px; display: flex; align-items: center; justify-content: center; }
.pi-on { background: #c9c9c9; }
.pane-rule { margin-top: 15px; width: 241px; height: 1px; background: #cbcbcb; position: relative; }
.pane-rule i { position: absolute; left: 11px; top: -4px; width: 8px; height: 8px; background: #e6e6e6; border-left: 1px solid #cbcbcb; border-top: 1px solid #cbcbcb; transform: rotate(45deg); }
.sec { display: flex; align-items: center; gap: 6px; height: 18px; margin-top: 6px; padding-left: 7px; }
.sec b { font-weight: 700; }
.radios { list-style: none; margin: 10px 0 0 21px; padding: 0; }
.radios li { height: 21.700px; display: flex; align-items: center; gap: 5px; white-space: nowrap; }
.radios li > span { padding-top: 2px; }
.radio { width: 11px; height: 11px; border-radius: 50%; background: #fff; border: 1px solid #a9a9a9; position: relative; flex: none; margin-top: -2px; }
.radio-on::after { content: ""; position: absolute; left: 2px; top: 2px; width: 5px; height: 5px; border-radius: 50%; background: #222; }
.sep { margin: 6px 0 0 20px; width: 202px; height: 1px; background: #cbcbcb; }
.prop { display: flex; align-items: center; padding-left: 30px; }
.prop-color { margin-top: 5px; height: 30px; justify-content: space-between; width: 222px; }
.color-l { margin-top: -2px; }
.colorbtn { width: 43px; height: 29px; background: #fff; border: 1px solid #a8a8a8; display: flex; align-items: center; justify-content: center; gap: 5px; }
.prop-trans { margin-top: 4px; height: 20px; width: 222px; }
.prop-trans > span:first-child { width: 74px; white-space: nowrap; }
.slider { position: relative; width: 44px; height: 1px; background: #a8a8a8; flex: none; }
.slider::before { content: ""; position: absolute; left: 0; top: 0; width: 18px; height: 1px; background: #333; }
.slider i { position: absolute; left: 17px; top: -4px; width: 2px; height: 9px; background: #333; }
.pct { margin-left: 7px; width: 67px; height: 19px; background: #fff; display: flex; align-items: center; justify-content: space-between; padding: 0 4px 0 6px; font-size: 11px; }
.pct .updown { gap: 4px; }
.sec-line { margin-top: 17px; padding-left: 8px; gap: 6px; }

/* status */
.status { flex: none; height: 22px; background: #eeeeee; border-top: 1px solid #d0d0d0; display: flex; align-items: center; font-size: 11px; color: #4a4a4a; padding-left: 6px; white-space: nowrap; }
.st-slide { width: 55px; }
.st-spell { margin-left: 16px; }
.st-lang { margin-left: 15px; width: 110px; }
.st-acc { margin-left: 14px; }
.st-access { margin-left: 2px; width: 116px; }
.st-notes { margin-left: 433px; }
.st-note-t { margin-left: 5px; width: 29px; }
.st-com { margin-left: 17px; }
.st-com-t { margin-left: 4px; width: 50px; }
.view { width: 38px; height: 21px; display: flex; align-items: center; justify-content: center; flex: none; }
.view-on { background: #c6c6c6; margin-left: 18px; }
.zoom-minus { margin-left: 4px; width: 7px; height: 1px; background: #555; flex: none; }
.zoom-track { position: relative; margin-left: 5px; width: 94px; height: 1px; background: #666; flex: none; }
.zt { position: absolute; left: 29px; top: -5px; width: 5px; height: 11px; background: #555; }
.zm { position: absolute; left: 47px; top: -3px; width: 1px; height: 7px; background: #666; }
.zoom-plus { position: relative; margin-left: 4px; width: 7px; height: 1px; background: #555; flex: none; }
.zoom-plus::after { content: ""; position: absolute; left: 3px; top: -3px; width: 1px; height: 7px; background: #555; }
.zoom-pct { margin-left: 13px; width: 22px; }
.st-fit { margin-left: 11px; }

/* logo */
.logo { position: absolute; left: 0; top: 529px; }
.logo-t1 { font-family: "Liberation Sans", sans-serif; font-size: 33px; fill: #fff; stroke: #fff; stroke-width: .3px; }
.logo-t2 { font-family: "Liberation Sans", sans-serif; font-size: 14px; fill: #fff; stroke: #fff; stroke-width: .2px; }
```
